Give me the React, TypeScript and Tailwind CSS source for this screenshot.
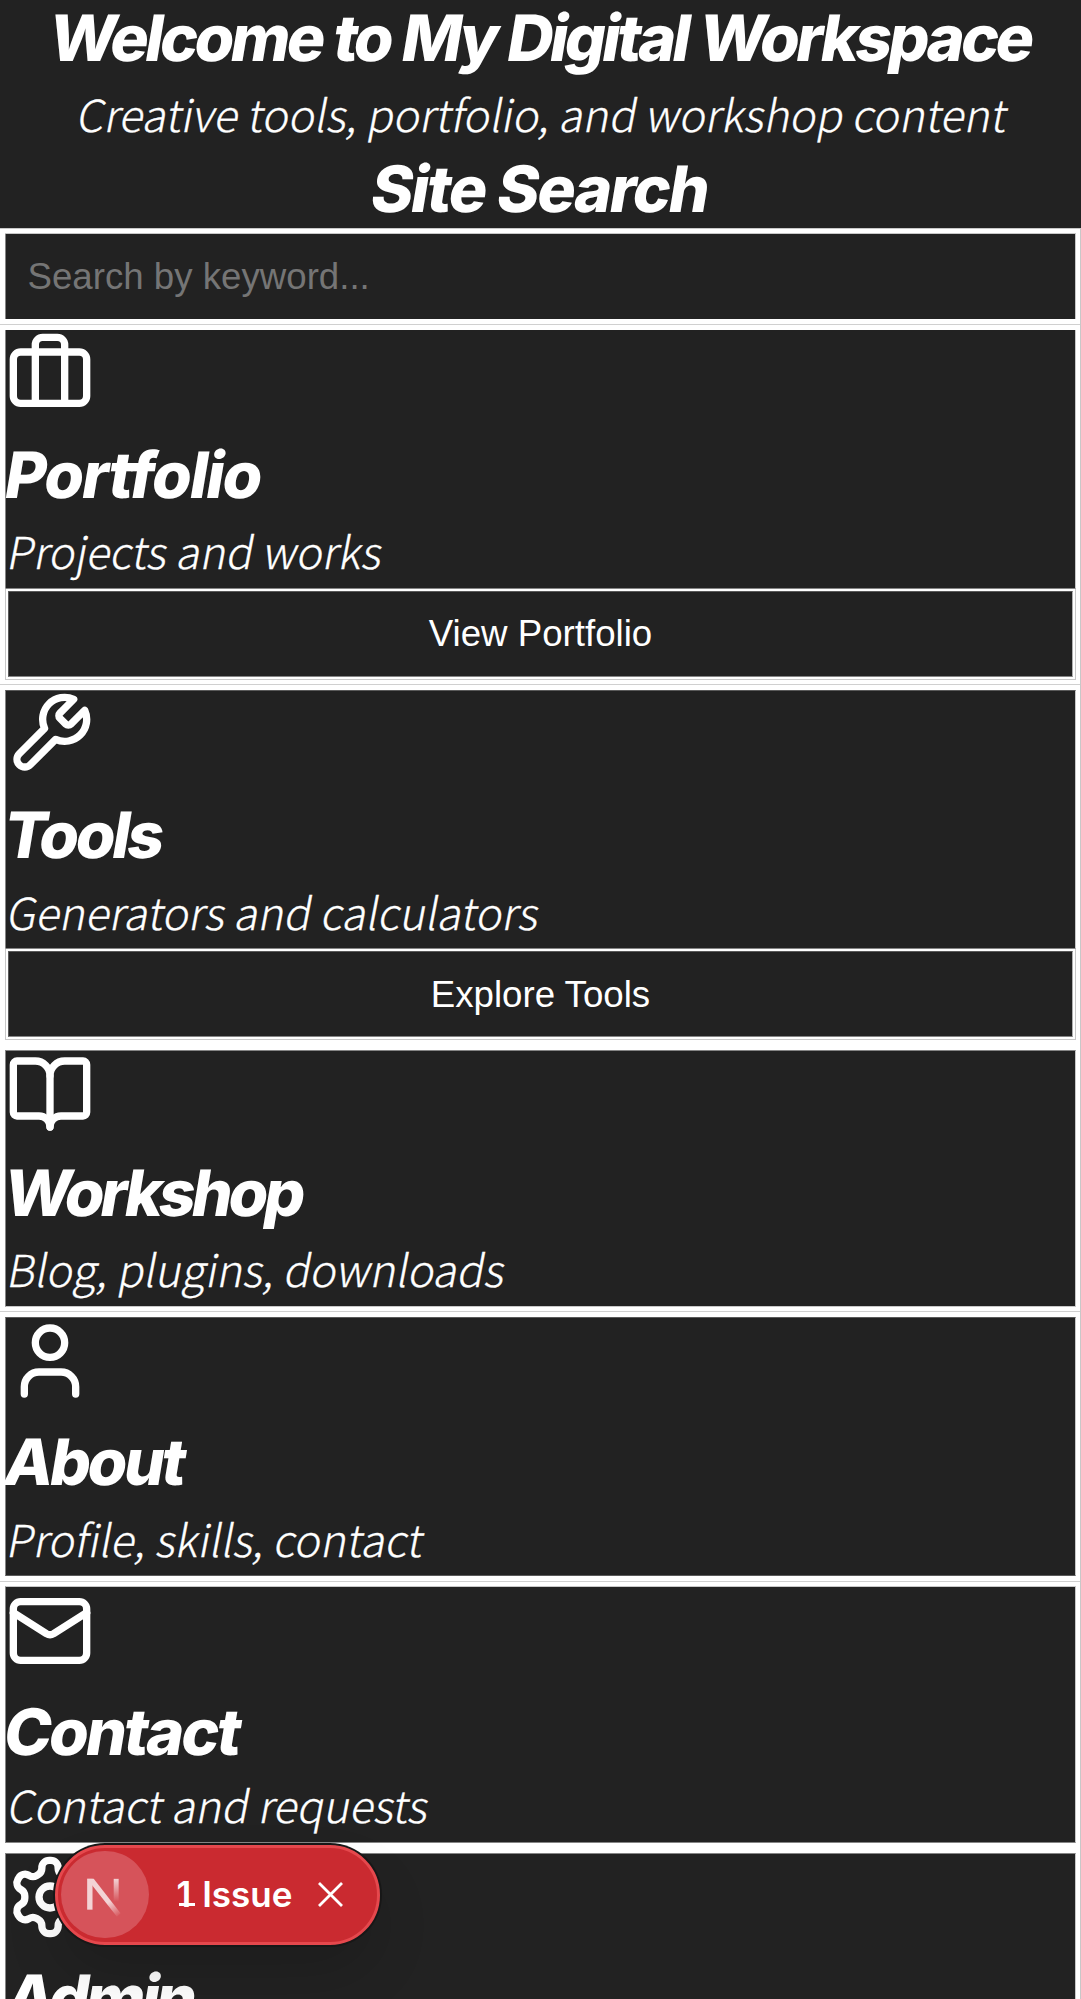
import type { ReactNode } from "react";

function Icon({ children, className = "" }: { children: ReactNode; className?: string }) {
  return (
    <svg
      viewBox="0 0 24 24"
      className={`block size-[88px] shrink-0 fill-none stroke-white stroke-2 [stroke-linecap:round] [stroke-linejoin:round] ${className}`}
    >
      {children}
    </svg>
  );
}

function Title({ text, className = "" }: { text: string; className?: string }) {
  return (
    <h2
      className={`w-max font-['Inter',sans-serif] text-[64px] font-extrabold whitespace-nowrap text-white transform-[skewX(-9.4deg)] ${className}`}
    >
      {text}
    </h2>
  );
}

function Subtitle({ text, className = "" }: { text: string; className?: string }) {
  return (
    <p
      className={`ml-[3px] w-max font-['Noto_Sans_CJK_JP','Noto_Sans',sans-serif] text-[44px] font-light whitespace-nowrap text-white transform-[skewX(-11deg)] [-webkit-text-stroke:0.3px_white] ${className}`}
    >
      {text}
    </p>
  );
}

function ActionButton({ text, className = "" }: { text: string; className?: string }) {
  return (
    <div className="border border-[#c8c8c8] border-t-[#858585] bg-white p-0.5">
      <button
        className={`flex h-[86px] w-full items-center justify-center border border-[#5a5a5a] border-r-[#b0b0b0] border-b-[#858585] bg-[#222] font-['Liberation_Sans',Arial,sans-serif] text-[36.67px] leading-none text-white ${className}`}
      >
        {text}
      </button>
    </div>
  );
}

function Card({ children, footer, className = "" }: { children: ReactNode; footer?: ReactNode; className?: string }) {
  return (
    <section className="mr-1 ml-[5px] overflow-hidden">
      <div className={`flex flex-col border-x border-x-[#858585] border-r-[#c8c8c8] bg-[#222] ${className}`}>{children}</div>
      {footer}
    </section>
  );
}

function Divider({ className = "h-[10px] pt-1", line = true }: { className?: string; line?: boolean }) {
  return <div className={`bg-white ${className}`}>{line && <div className="h-px bg-[#d0d0d0]" />}</div>;
}

export default function App() {
  return (
    <div className="relative h-[1999px] w-full overflow-hidden bg-white">
      <header className="flex h-[228px] flex-col items-center bg-[#222]">
        <Title text="Welcome to My Digital Workspace" className="leading-[76px] tracking-[-3.4px] [word-spacing:1px]" />
        <Subtitle text="Creative tools, portfolio, and workshop content" className="pl-[3px] leading-[74px]" />
        <Title text="Site Search" className="leading-[78px] tracking-[-2.1px]" />
      </header>
      <main className="border-r border-r-[#c8c8c8]">
        <div className="h-[6px] border-t border-[#c8c8c8] bg-white pt-1 pr-1 pl-[5px]">
          <div className="h-px bg-[#c8c8c8]" />
        </div>
        <Card>
          <input
            placeholder="Search by keyword..."
            className="h-[85px] bg-transparent px-[21.5px] font-['Liberation_Sans',Arial,sans-serif] text-[36.67px] text-white placeholder:text-[#757575] placeholder:opacity-100"
          />
        </Card>
        <Divider className="h-[11px] pt-[5px]" />
        <Card footer={<ActionButton text="View Portfolio" />}>
          <div className="h-[106px]">
            <Icon>
              <path d="M16 20V4a2 2 0 0 0-2-2h-4a2 2 0 0 0-2 2v16" />
              <rect width="20" height="14" x="2" y="6" rx="2" />
            </Icon>
          </div>
          <Title text="Portfolio" className="leading-[78px] tracking-[-1.8px]" />
          <Subtitle text="Projects and works" className="h-[74px] leading-[72px]" />
        </Card>
        <Divider />
        <Card className="border-t border-t-[#5a5a5a]" footer={<ActionButton text="Explore Tools" className="pt-0.5" />}>
          <div className="h-[105px]">
            <Icon className="-mt-px">
              <path d="M14.7 6.3a1 1 0 0 0 0 1.4l1.6 1.6a1 1 0 0 0 1.4 0l3.77-3.77a6 6 0 0 1-7.94 7.94l-6.91 6.91a2.12 2.12 0 0 1-3-3l6.91-6.91a6 6 0 0 1 7.94-7.94l-3.76 3.76z" />
            </Icon>
          </div>
          <Title text="Tools" className="-ml-px leading-[78px] tracking-[-3.1px]" />
          <Subtitle text="Generators and calculators" className="h-[74px] leading-[74px]" />
        </Card>
        <Divider line={false} />
        <Card className="border-y border-t-[#858585] border-b-[#c8c8c8]">
          <div className="h-[103px]">
            <Icon className="-mt-px">
              <path d="M12 7v14" />
              <path d="M3 18a1 1 0 0 1-1-1V4a1 1 0 0 1 1-1h5a4 4 0 0 1 4 4 4 4 0 0 1 4-4h5a1 1 0 0 1 1 1v13a1 1 0 0 1-1 1h-6a3 3 0 0 0-3 3 3 3 0 0 0-3-3z" />
            </Icon>
          </div>
          <Title text="Workshop" className="-ml-px leading-[78px] tracking-[-3.8px]" />
          <Subtitle text="Blog, plugins, downloads" className="h-[74px] leading-[72px]" />
        </Card>
        <Divider />
        <Card className="border-y border-t-[#5a5a5a] border-b-[#5a5a5a]">
          <div className="h-[105px]">
            <Icon className="-mt-px">
              <path d="M19 21v-2a4 4 0 0 0-4-4H9a4 4 0 0 0-4 4v2" />
              <circle cx="12" cy="7" r="4" />
            </Icon>
          </div>
          <Title text="About" className="-ml-px leading-[78px] tracking-[-3.2px]" />
          <Subtitle text="Profile, skills, contact" className="h-[74px] leading-[74px]" />
        </Card>
        <Divider className="h-[10px] pt-[5px]" />
        <Card className="border-y border-t-[#c8c8c8] border-b-[#858585]">
          <div className="h-[106px]">
            <Icon>
              <path d="m22 7-8.991 5.727a2 2 0 0 1-2.009 0L2 7" />
              <rect x="2" y="4" width="20" height="16" rx="2" />
            </Icon>
          </div>
          <Title text="Contact" className="-ml-px leading-[78px] tracking-[-2.6px]" />
          <Subtitle text="Contact and requests" className="h-[71px] leading-[66px]" />
        </Card>
        <Divider line={false} />
        <Card className="border-t border-t-[#858585]">
          <div className="h-[105px]">
            <Icon className="-mt-px">
              <path d="M12.22 2h-.44a2 2 0 0 0-2 2v.18a2 2 0 0 1-1 1.73l-.43.25a2 2 0 0 1-2 0l-.15-.08a2 2 0 0 0-2.73.73l-.22.38a2 2 0 0 0 .73 2.73l.15.1a2 2 0 0 1 1 1.72v.51a2 2 0 0 1-1 1.74l-.15.09a2 2 0 0 0-.73 2.73l.22.38a2 2 0 0 0 2.73.73l.15-.08a2 2 0 0 1 2 0l.43.25a2 2 0 0 1 1 1.73V20a2 2 0 0 0 2 2h.44a2 2 0 0 0 2-2v-.18a2 2 0 0 1 1-1.73l.43-.25a2 2 0 0 1 2 0l.15.08a2 2 0 0 0 2.73-.73l.22-.39a2 2 0 0 0-.73-2.73l-.15-.08a2 2 0 0 1-1-1.74v-.5a2 2 0 0 1 1-1.74l.15-.09a2 2 0 0 0 .73-2.73l-.22-.38a2 2 0 0 0-2.73-.73l-.15.08a2 2 0 0 1-2 0l-.43-.25a2 2 0 0 1-1-1.73V4a2 2 0 0 0-2-2z" />
              <circle cx="12" cy="12" r="3" />
            </Icon>
          </div>
          <Title text="Admin" className="leading-[78px] tracking-[-3.6px]" />
        </Card>
      </main>

      <div className="absolute top-[1844.5px] left-[55px] flex h-[100px] w-[325px] items-center rounded-full border-[3px] border-[#e5484d] bg-[#ca2a30] pl-[3px] shadow-[0_0_0_2px_#171717,0_30px_60px_-6px_rgba(0,0,0,0.16)]">
        <div className="size-[87.5px] shrink-0 rounded-full bg-[#d6535a]">
          <svg viewBox="0 0 88 88" className="size-full fill-none">
            <defs>
              <linearGradient id="diag" x1="50" y1="50" x2="60" y2="65" gradientUnits="userSpaceOnUse">
                <stop offset="0" stopColor="#f3d3d5" />
                <stop offset="1" stopColor="#f3d3d5" stopOpacity="0" />
              </linearGradient>
              <linearGradient id="bar" x1="0" y1="28" x2="0" y2="51" gradientUnits="userSpaceOnUse">
                <stop offset="0" stopColor="#f3d3d5" />
                <stop offset="1" stopColor="#f3d3d5" stopOpacity="0" />
              </linearGradient>
            </defs>
            <path d="M26.3 28h5.4v31h-5.4z" fill="#f3d3d5" />
            <path d="M26.3 28h6.6l27 34.5-3.6 3.5L31.700 35z" fill="url(#diag)" />
            <path d="M53 28h5v23h-5z" fill="url(#bar)" />
          </svg>
        </div>
        <span className="ml-[28px] pb-[2px] font-['Inter',sans-serif] text-[35px] leading-[92px] font-semibold whitespace-nowrap text-white [word-spacing:2px]">
          <span className="relative inline-block after:absolute after:top-[55px] after:left-[2px] after:h-[3.5px] after:w-[16px] after:bg-white">1</span> Issue
        </span>
        <svg viewBox="0 0 25 25" className="ml-[26px] size-[25px] shrink-0 stroke-white [stroke-width:2.8]">
          <path d="M1 1l23 23M24 1L1 24" />
        </svg>
      </div>
    </div>
  );
}
